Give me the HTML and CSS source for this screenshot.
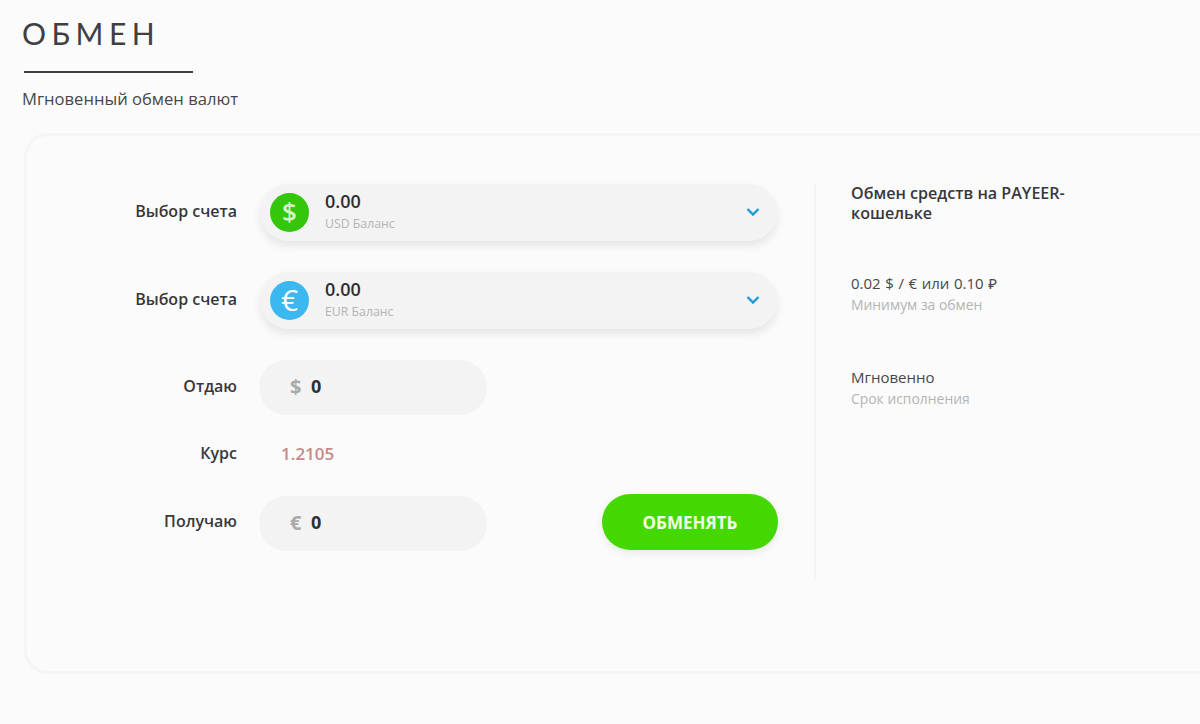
FILE: index.html
```html
<!DOCTYPE html>
<html lang="ru">
<head>
  <meta charset="UTF-8">
  <meta name="viewport" content="width=device-width, initial-scale=1.0">
  <title>Обмен</title>
  <link rel="stylesheet" href="styles.css">
</head>
<body>
  <div class="page-head">
    <h1 class="page-title">ОБМЕН</h1>
    <div class="page-line"></div>
    <div class="page-subtitle">Мгновенный обмен валют</div>
  </div>

  <div class="card">
    <div class="exchange-form">
      <div class="form-row">
        <div class="form-label">Выбор счета</div>
        <div class="account-select">
          <div class="account-icon icon-usd">$</div>
          <div class="account-info">
            <div class="account-amount">0.00</div>
            <div class="account-name">USD Баланс</div>
          </div>
          <svg class="account-arrow" width="14" height="10" viewBox="0 0 14 10" fill="none" xmlns="http://www.w3.org/2000/svg">
            <path d="M1.5 2L7 7.5L12.5 2" stroke="currentColor" stroke-width="2.4"/>
          </svg>
        </div>
      </div>

      <div class="form-row">
        <div class="form-label">Выбор счета</div>
        <div class="account-select">
          <div class="account-icon icon-eur">€</div>
          <div class="account-info">
            <div class="account-amount">0.00</div>
            <div class="account-name">EUR Баланс</div>
          </div>
          <svg class="account-arrow" width="14" height="10" viewBox="0 0 14 10" fill="none" xmlns="http://www.w3.org/2000/svg">
            <path d="M1.5 2L7 7.5L12.5 2" stroke="currentColor" stroke-width="2.4"/>
          </svg>
        </div>
      </div>

      <div class="form-row">
        <div class="form-label">Отдаю</div>
        <div class="amount-input">
          <span class="amount-sign">$</span>
          <span class="amount-value">0</span>
        </div>
      </div>

      <div class="form-row rate-row">
        <div class="form-label">Курс</div>
        <div class="rate-value">1.2105</div>
      </div>

      <div class="form-row submit-row">
        <div class="form-label">Получаю</div>
        <div class="amount-input">
          <span class="amount-sign">€</span>
          <span class="amount-value">0</span>
        </div>
        <button class="exchange-button">ОБМЕНЯТЬ</button>
      </div>
    </div>

    <div class="side-info">
      <div class="side-title">Обмен средств на PAYEER-кошельке</div>
      <div class="side-block side-min">
        <div class="side-value">0.02 $ / € или 0.10 ₽</div>
        <div class="side-caption">Минимум за обмен</div>
      </div>
      <div class="side-block side-term">
        <div class="side-value">Мгновенно</div>
        <div class="side-caption">Срок исполнения</div>
      </div>
    </div>
  </div>
</body>
</html>
```

FILE: styles.css
```css
:root {
  --page-bg: #FBFBFB;
  --field-bg: #F3F3F3;
  --text-dark: #2E2E33;
  --text-grey: #B4B4B4;
  --green: #44D800;
  --blue: #1C98DC;
}

html, body {
  height: 100%;
}

body {
  margin: 0;
  padding: 0;
  overflow: hidden;
  background-color: var(--page-bg);
  color: var(--text-dark);
  font-family: "Open Sans", "Noto Sans", sans-serif;
}

.page-head {
  padding: 13px 0 0 22px;
}

.page-title {
  margin: 0;
  font-family: "Lato", "Noto Sans", sans-serif;
  font-size: 30px;
  font-weight: 400;
  line-height: 40px;
  letter-spacing: 5.5px;
  color: #3F3F42;
}

.page-line {
  width: 169px;
  height: 2px;
  margin: 18px 0 0 2px;
  background-color: #3F3F42;
}

.page-subtitle {
  margin-top: 15px;
  font-size: 16.6px;
  line-height: 22px;
  color: #47474A;
}

.card {
  display: flex;
  box-sizing: border-box;
  height: 541px;
  margin: 23px 0 0 24px;
  padding: 48px 0 0 100px;
  border: 3px solid #F5F5F5;
  border-right: none;
  border-radius: 24px 0 0 24px;
}

.exchange-form {
  width: 651px;
}

.form-row {
  display: flex;
  align-items: center;
  margin-bottom: 31px;
}

.form-label {
  width: 110px;
  margin-right: 23px;
  padding-bottom: 3px;
  font-size: 16px;
  font-weight: 600;
  text-align: right;
  color: #38383C;
}

.account-select {
  display: flex;
  flex: 1;
  align-items: center;
  height: 57px;
  margin-right: 1px;
  padding: 0 17px 0 10px;
  border-radius: 29px;
  background-color: var(--field-bg);
  box-shadow: 0 5px 10px rgba(0,0,0,0.09);
}

.account-icon {
  width: 39px;
  height: 39px;
  border-radius: 50%;
  color: #D8F5C8;
  font-size: 26px;
  font-weight: 600;
  line-height: 37px;
  text-align: center;
}

.icon-usd {
  background-color: #34C60B;
}

.icon-eur {
  background-color: #3BB8F0;
  color: #FFFFFF;
  font-size: 30px;
  font-weight: 500;
}

.account-info {
  flex: 1;
  margin-left: 16px;
}

.account-amount {
  font-size: 18px;
  font-weight: 600;
  line-height: 18px;
}

.account-name {
  margin-top: 4px;
  font-size: 12.3px;
  line-height: 20px;
  color: var(--text-grey);
}

.account-arrow {
  margin-top: -2px;
  color: var(--blue);
}

.amount-input {
  display: flex;
  align-items: center;
  box-sizing: border-box;
  width: 228px;
  height: 55px;
  margin-left: -1px;
  padding: 0 0 3px 31px;
  border-radius: 28px;
  background-color: var(--field-bg);
}

.amount-sign {
  width: 21px;
  font-size: 20px;
  font-weight: 700;
  color: #A9A9A9;
}

.amount-value {
  font-size: 18px;
  font-weight: 700;
}

.rate-row {
  height: 76px;
  margin-top: -31px;
  margin-bottom: 3px;
}

.rate-row .form-label {
  padding-bottom: 0;
}

.rate-value {
  padding-left: 21px;
  font-size: 17px;
  font-weight: 600;
  color: #C58A8A;
}

.submit-row {
  align-items: flex-start;
  margin-bottom: 0;
}

.submit-row .form-label {
  align-self: center;
}

.submit-row .amount-input {
  margin-top: 2px;
}

.exchange-button {
  width: 176px;
  height: 56px;
  margin-left: auto;
  border: none;
  border-radius: 28px;
  background-color: var(--green);
  box-shadow: 0 3px 8px rgba(0,0,0,0.08);
  color: #F2FFE8;
  font-family: inherit;
  font-size: 17px;
  font-weight: 700;
  cursor: pointer;
}

.side-info {
  box-sizing: border-box;
  width: 300px;
  height: 396px;
  margin-left: 36px;
  padding-left: 35px;
  border-left: 2px solid #F4F4F4;
}

.side-title {
  width: 230px;
  margin-top: -1px;
  font-size: 16.1px;
  font-weight: 600;
  line-height: 20px;
  color: #38383C;
}

.side-min {
  margin-top: 50px;
}

.side-min .side-value {
  word-spacing: 0.7px;
}

.side-term {
  margin-top: 52px;
}

.side-value {
  font-size: 15px;
  line-height: 21px;
  color: #47474A;
}

.side-caption {
  font-size: 13.9px;
  line-height: 21px;
  color: var(--text-grey);
}
```
